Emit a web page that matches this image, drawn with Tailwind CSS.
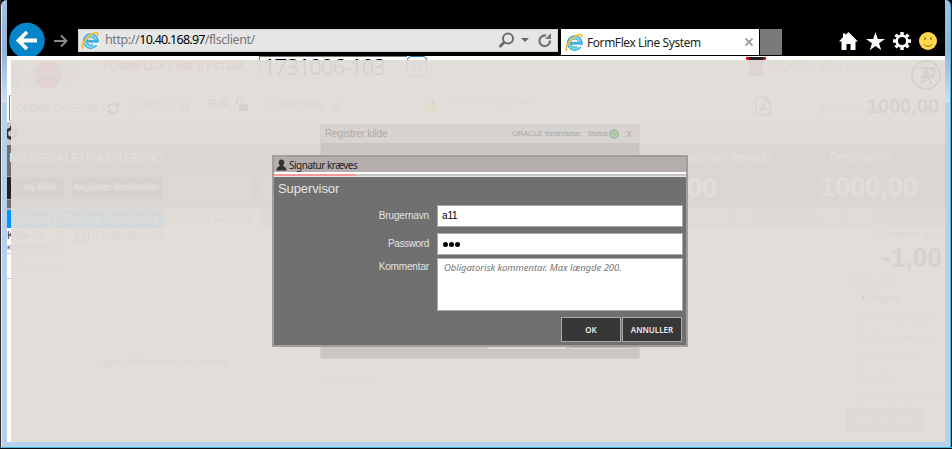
<!DOCTYPE html>
<html lang="da">
<head>
<meta charset="utf-8">
<title>FormFlex Line System</title>
<script src="https://cdn.jsdelivr.net/npm/@tailwindcss/browser@4"></script>
</head>
<body class="w-[952px] h-[449px] overflow-hidden bg-[#171c24] font-['Liberation_Sans',Arial,sans-serif] whitespace-nowrap">
<svg class="hidden">
  <symbol id="ie" viewBox="0 0 20 20">
    <circle cx="10.2" cy="10.6" r="6" fill="none" stroke="#329ed3" stroke-width="4.5"/>
    <circle cx="10.2" cy="10.6" r="5.9" fill="none" stroke="#78d6f5" stroke-width="2.6"/>
    <path d="M5 10.8h13.6" stroke="#42aedf" stroke-width="3"/>
    <path d="M12.5 12.4h7.5v2.3h-7.5z" fill="#f5f8fa"/>
    <path d="M2.4 18.5C-1 16.5 4 8 11 3.500C15 1 18.500.8 17.400 4.800" fill="none" stroke="#f4bd31" stroke-width="2"/>
  </symbol>
  <symbol id="lock" viewBox="0 0 12 14"><path d="M3 7V4a3 3 0 016 0v3" fill="none" stroke="currentColor" stroke-width="1.6"/><path d="M1 6.500h10V13H1z" fill="currentColor"/></symbol>
  <symbol id="refresh" viewBox="0 0 14 14"><path d="M1.500 6.500A5.500 5.500 0 0111 3.500M12.500 7.500A5.500 5.500 0 013 10.500" fill="none" stroke="currentColor" stroke-width="1.800"/><path d="M13 1v5H8zM1 13V8h5z" fill="currentColor"/></symbol>
  <symbol id="user" viewBox="0 0 12 12"><path d="M6 0c4 0 3.500 5 1.700 6.500C8 8 11.500 7.500 11.500 12H.5C.5 7.500 4 8 4.300 6.500C2.500 5 2 0 6 0z" fill="currentColor"/></symbol>
</svg>
<div class="relative flex flex-col w-[952px] h-[449px] bg-black border-b border-[#0a1014]">
  <div class="flex h-[448px] border-l border-[#352f36] border-b border-b-[#45b5d5]">
    <div class="w-[6px] shrink-0 rounded-tl-md border-l border-[#dfeaf5] bg-[linear-gradient(#a5c2df_0px,#93b2da_50px,#cfdff0_102px,#b8d1eb_103px)]"></div>
    <main class="w-[938px] flex flex-col shrink-0">
      <header class="h-[56px] shrink-0 flex pt-[22px] pl-[2px] overflow-hidden">
        <svg class="w-[36px] h-[37px] shrink-0" viewBox="0 0 36 37"><circle cx="18" cy="18.500" r="17.800" fill="#0385c8"/><path d="M28 18.500H10M18 10l-8.500 8.500L18 27" fill="none" stroke="#fff" stroke-width="3.800"/></svg>
        <svg class="w-[14px] h-[14px] mt-[12px] ml-[9px] shrink-0" viewBox="0 0 14 14"><path d="M0 7h12M7 1.500L12.500 7 7 12.500" fill="none" stroke="#8a8a8a" stroke-width="2"/></svg>
        <div class="flex w-[480px] h-[23px] mt-[7px] ml-[10px] bg-[#e6e6e6] items-center shrink-0 border border-[#d2d2d2]">
          <svg class="w-[19px] h-[19px] ml-[2px]"><use href="#ie"/></svg>
          <span class="ml-[5px] text-[12.500px] tracking-[-.4px] font-['Noto_Sans',sans-serif] text-[#777]">http://<b class="font-normal text-black tracking-[-.75px]">10.40.168.97</b>/flsclient/</span>
          <svg class="ml-auto w-[17px] h-[17px]" viewBox="0 0 17 17"><circle cx="10" cy="6.500" r="5" fill="none" stroke="#6b6b6b" stroke-width="2"/><path d="M6.500 10L1.500 15" stroke="#6b6b6b" stroke-width="2.600"/></svg>
          <svg class="ml-[6px] w-[8px] h-[5px]" viewBox="0 0 8 5"><path d="M0 0h8L4 4z" fill="#666"/></svg>
          <svg class="ml-[8px] mr-[5px] w-[15px] h-[15px]" viewBox="0 0 15 15"><path d="M9 2.700A5.300 5.300 0 1013 7.500" fill="none" stroke="#777" stroke-width="2.300"/><path d="M8 6h6V0z" fill="#777"/></svg>
        </div>
        <div class="flex items-center w-[198px] h-[26px] mt-[7px] ml-[3px] bg-white shrink-0">
          <svg class="w-[19px] h-[19px] ml-[4px]"><use href="#ie"/></svg>
          <span class="ml-[3px] mt-[2px] text-[11.900px] tracking-[-.38px] text-[#222] font-['Noto_Sans',sans-serif]">FormFlex Line System</span>
          <svg class="ml-auto mr-[6px] w-[8px] h-[8px]" viewBox="0 0 8 8"><path d="M.5.5l7 7M7.500.5l-7 7" stroke="#999" stroke-width="1.700"/></svg>
        </div>
        <div class="w-[22px] h-[26px] mt-[7px] ml-[1px] bg-[#7a7a7a] shrink-0"></div>
        <div class="flex items-center gap-[8px] ml-[57px] mt-[-2px] h-[42px]">
          <svg class="w-[19px] h-[19px]" viewBox="0 0 19 19"><path d="M9.500 0L19 9.500h-2.500V18H11.500v-6h-4v6h-5V9.500H0L4 5V1.500h2.500V3z" fill="#fff"/></svg>
          <svg class="w-[19px] h-[19px]" viewBox="0 0 19 19"><path d="M9.500 0l2.300 7H19l-6 4.200 2.300 7-5.800-4.300-5.800 4.300L6 11.200 0 7h7.200z" fill="#fff"/></svg>
          <svg class="w-[18px] h-[18px]" viewBox="-9 -9 18 18"><circle r="5.300" fill="none" stroke="#fff" stroke-width="2.600"/><path d="M0-9v3M0 9V6M-9 0h3M9 0H6M-6.400-6.400l2 2M6.400 6.400l-2-2M-6.400 6.400l2-2M6.400-6.400l-2 2" stroke="#fff" stroke-width="3.400"/></svg>
          <svg class="w-[18px] h-[18px]" viewBox="0 0 18 18"><circle cx="9" cy="9" r="9" fill="#ffd94b"/><ellipse cx="6" cy="6.500" rx=".8" ry="1.500" fill="#8b6b16"/><ellipse cx="12" cy="6.500" rx=".8" ry="1.500" fill="#8b6b16"/><path d="M4.500 12c2 3 7 3 9 0" fill="none" stroke="#8b6b16" stroke-width="1"/></svg>
        </div>
      </header>

      <section class="relative h-[386px] bg-white overflow-hidden text-[12px] leading-none text-[#555]">
        <div class="flex h-[38px]">
          <svg class="w-[72px] h-[27px] mt-[6px] ml-[5px] shrink-0" viewBox="0 0 72 27"><path d="M0 26V1h7l12 15V1h7v25h-7L7 12v14zM45 1h9l3 15L66 1h6L57 26h-7z" fill="#ccc"/><circle cx="36" cy="13" r="13.500" fill="#d63640"/><path d="M23 15c8-9 20 2 25-7" fill="none" stroke="#eee" stroke-width="2"/></svg>
          <b class="ml-[19px] w-[140px] mt-[5px] text-[11.500px] tracking-[-.15px] text-[#d9000c] shrink-0">FORMFLEX LINE SYSTEM</b>
          <div class="ml-[16px] w-[148px] h-[22px] border-t border-l border-[#777] shrink-0 pl-[3px]"><span class="block text-[22.500px] leading-[20px] tracking-[-1.300px] text-black font-['Noto_Sans',sans-serif]">1731006-103</span></div>
          <div class="w-[20px] h-[21px] rounded-sm border border-[#2878b0] grid place-items-center shrink-0"><svg class="w-[10px] h-[10px] text-[#777]"><use href="#refresh"/></svg></div>
          <svg class="w-[20px] h-[20px] mt-[1px] ml-[319px] shrink-0 text-[#c34545]" viewBox="0 0 20 20"><path d="M0 0h20v2l-4 9 4 8H0l4-8L0 2z" fill="currentColor"/><path d="M0 0h20v1l-2 2H2L0 1z" fill="#e00000"/><path d="M3 0h14v3H3z" fill="#222"/></svg>
          <span class="ml-[2px] mt-[6px] text-[10.500px] tracking-[-.15px] w-[136px] shrink-0">BRUGER:&nbsp; NOV Arbejdsstation</span>
          <svg class="w-[30px] h-[30px] mt-[4px] ml-auto mr-[4px] shrink-0 text-black" viewBox="0 0 30 30"><circle cx="15" cy="15" r="14" fill="none" stroke="currentColor" stroke-width="2"/><path d="M6 8h18M11 24l4-16 5 16M9 17h14M15 8v14M18 9c8-1 7 8 0 8" fill="none" stroke="currentColor" stroke-width="2"/></svg>
        </div>
        <div class="flex h-[28px] text-[11.500px]">
          <div class="ml-[2px] mt-[1px] w-[124px] h-[26px] flex items-center border border-[#ccc] border-l-[#777] pl-[5px] gap-[6px] shrink-0"><span class="text-[11px] tracking-[-.65px] w-[86px]">ORDRE OVERSIGT</span><svg class="w-[13px] h-[13px] shrink-0 text-black"><use href="#refresh"/></svg></div>
          <div class="mt-[1px] w-[68px] h-[25px] flex items-center border border-[#ccc] pl-[5px] pb-[4px] gap-[9px] shrink-0"><span class="text-[10.500px] tracking-[-.4px] w-[32px]">SETUP</span><svg class="w-[11px] h-[13px] text-[#aaa]"><use href="#lock"/></svg></div>
          <div class="w-[60px] h-[22px] flex items-center pl-[6px] pb-[2px] gap-[8px] shrink-0 text-black"><span class="text-[10px] tracking-[-.3px]">RUN</span><svg class="w-[12px] h-[13px]" viewBox="0 0 12 13"><path d="M1 6V3a2.500 2.500 0 015 0v3" fill="none" stroke="currentColor" stroke-width="1.500"/><path d="M3 6h9v7H3z" fill="currentColor"/></svg></div>
          <div class="mt-[1px] w-[92px] h-[25px] flex items-center border border-[#ccc] pl-[5px] pb-[4px] gap-[9px] shrink-0"><span class="text-[10.500px] tracking-[-.65px] w-[56px]">TEARDOWN</span><svg class="w-[10px] h-[13px] text-[#aaa]"><use href="#lock"/></svg></div>
          <svg class="w-[15px] h-[14px] ml-[72px] mt-[2px] shrink-0" viewBox="0 0 15 14"><path d="M7.500 0L15 14H0z" fill="#dfd000"/><path d="M7.500 4v5M7.500 10.500v1.500" stroke="#222" stroke-width="1.500"/></svg>
          <span class="ml-[9px] mt-[3px] text-[10px] tracking-[-.05px] w-[90px] shrink-0 text-[#777]">Ventende lab prøver</span>
          <svg class="w-[16px] h-[20px] ml-[216px] mt-[2px] shrink-0 text-[#333]" viewBox="0 0 16 20"><path d="M1 3a2 2 0 012-2h7l5 5v11a2 2 0 01-2 2H3a2 2 0 01-2-2zM10 1v5h5M3.500 15c5-1 4-5 4-8 0 4 3 6 5 6-3-1-6 0-9 2" fill="none" stroke="currentColor" stroke-width="1.500"/></svg>
          <div class="ml-auto mr-[6px] flex items-baseline gap-[4px]"><span class="text-[12px] text-[#666]">1000,00</span><b class="text-[20.500px] leading-[23px] text-black tracking-[-.25px]">1000,00</b></div>
        </div>
        <div class="h-[23px] bg-[#c8c5c2] flex items-center"><svg class="w-[14px] h-[15px] ml-[-3px]" viewBox="0 0 14 15"><circle cx="7" cy="7.500" r="4.500" fill="none" stroke="#333" stroke-width="3"/><path d="M7 0v15M0 7h14" stroke="#333" stroke-width="2" stroke-dasharray="3 8"/></svg></div>
        <div class="h-[63px] bg-[#707070] flex text-white">
          <div class="w-[673px] flex flex-col shrink-0">
            <span class="mt-[6px] ml-[2px] text-[13.500px] tracking-[-.5px]">MATERIALEHANDTERING</span>
            <div class="flex mt-[11px] gap-[5px] text-[8.500px] tracking-[-.25px] font-bold font-['Noto_Sans',sans-serif]">
              <div class="w-[58px] h-[24px] bg-[#222] border border-[#999] border-l-0 grid place-items-center pl-[10px]">Ny kilde</div>
              <div class="w-[93px] h-[24px] bg-[#222] border border-[#999] grid place-items-center">Registrer destination</div>
              <div class="w-[85px] h-[24px] bg-[#999] grid place-items-center text-[#bbb]">Stop brug af kilde</div>
              <div class="w-[85px] h-[24px] bg-[#999] flex items-center pl-[4px] text-[#bbb]">St</div>
            </div>
          </div>
          <div class="w-[100px] shrink-0 pt-[6px]"><div class="text-[12px] tracking-[-.15px] w-[92px] text-right">materiale længde:</div><b class="block mt-[8px] ml-[7px] text-[27px] leading-[35px]">00</b></div>
          <div class="w-[165px] pt-[6px] text-center"><div class="text-[12px] pr-[2px]">Destination:</div><b class="block text-[27px] leading-[35px] mt-[7px] ml-[13px]">1000,00</b></div>
        </div>
        <div class="h-[20px] bg-[#b6b3b1] flex items-end text-[9.500px] tracking-[-.3px] font-['Noto_Sans',sans-serif]">
          <div class="w-[47px] h-[18px] bg-[#0095ff] text-white grid place-items-center pl-[7px]">Lab test</div>
          <div class="w-[107px] h-[18px] ml-[3px] bg-[#0095ff] text-white grid place-items-center">Registrer lab svejsning</div>
          <div class="w-[92px] h-[19px] ml-[3px] bg-white grid place-items-center text-[#555]">Registrer svejsning</div>
          <span class="ml-[431px] mb-[8px] text-white">45&nbsp; Vægt:&nbsp; 7958</span><span class="ml-[67px] mb-[8px] text-white">Total:&nbsp; -4,00</span>
        </div>
        <div class="flex h-[214px]">
          <div class="w-[260px] shrink-0">
            <div class="flex h-[15px] items-center text-[#333] text-[10.500px] tracking-[-.35px]"><span class="w-[49px]">Kilde-ID:</span><span class="w-[20px]">()</span><svg class="w-[13px] h-[13px] mr-[6px]" viewBox="0 0 13 13"><path d="M.5.500h12v12H.5zM3 4h1M5 4h5M3 7h1M5 7h5M3 10h1M5 10h5" fill="none" stroke="currentColor"/></svg><span>Destinations-ID:</span></div>
            <div class="h-[10px] text-[8px] pt-px">Kommentar fejl</div>
            <div class="flex h-[26px] items-center border-y border-[#aaccdd] text-[10.500px] text-[#777]"><span class="w-[17px] h-full flex items-center pl-[5px] border-r border-[#ddd]">ID</span><span class="pl-[4px]">Position</span></div>
            <b class="block mt-[79px] ml-[91px] text-[10px] tracking-[-.15px] text-[#777]">Ingen kildemateriale indlæst</b>
          </div>
          <div class="ml-[57px] mt-[139px] w-[310px] shrink-0 flex text-[10px] text-[#999]"><span class="w-[94px] mt-[6px]">Kommentar</span><div class="w-[216px] h-[60px] border border-[#ddd]"></div></div>
          <div class="ml-auto w-[99px] shrink-0 overflow-hidden">
            <div class="pl-[28px] pt-[1px] text-[11.500px] tracking-[-.1px]">Til næste fejl</div>
            <b class="block text-right pr-[3px] text-[27px] leading-[34px] text-black tracking-[-.3px]">-1,00</b>
            <div class="text-[11px] text-[#888]">Signer for:</div>
            <div class="pl-[11px] pt-[2px] text-[9.500px] leading-[20px] tracking-[-.25px] text-[#888] font-['Noto_Sans',sans-serif]">
              <div class="flex h-[20px] items-center gap-[4px] text-[#222]"><i class="w-[12px] h-[12px] shrink-0 rounded-full border border-[#888] grid place-items-center"><i class="w-[4px] h-[4px] rounded-full bg-[#222]"></i></i>Ingen</div>
              <div class="flex h-[20px] items-center gap-[4px]"><i class="w-[12px] h-[12px] shrink-0 rounded-full border border-[#aaa]"></i>Udklipsdetaljer</div>
              <div class="flex h-[20px] items-center gap-[4px]"><i class="w-[12px] h-[12px] shrink-0 rounded-full border border-[#aaa]"></i>Flash Welding</div>
              <div class="flex h-[20px] items-center gap-[4px]"><i class="w-[12px] h-[12px] shrink-0 rounded-full border border-[#aaa]"></i>Visuel test</div>
              <div class="flex h-[20px] items-center gap-[4px]"><i class="w-[12px] h-[12px] shrink-0 rounded-full border border-[#aaa]"></i>MPI-I</div>
              <div class="flex h-[20px] items-center gap-[4px]"><i class="w-[12px] h-[12px] shrink-0 rounded-full border border-[#aaa]"></i>Svejsning afslutte</div>
            </div>
            <div class="w-[77px] h-[24px] bg-[#aaa] text-white grid place-items-center text-[9px]">Gem og afslut</div>
          </div>
        </div>
        <div class="absolute left-[4px] top-[4px] right-0 bottom-0 bg-[#e0dcd8]/[.952]"></div>

        <!-- source registration dialog, dimmed -->
        <div class="absolute left-[313px] top-[68px] w-[320px] h-[235px] bg-[#cac6c3] border border-[#d4d0cd]">
          <div class="h-[18px] bg-[#d7d3d0] flex items-center pl-[4px] text-[#aeaaa7]"><span class="text-[10px] tracking-[-.1px]">Registrer kilde</span><span class="ml-auto text-[8px] tracking-[-.35px] w-[94px]">ORACLE forbindelse:&nbsp;&nbsp; Status</span><i class="ml-[3px] w-[10px] h-[10px] rounded-full bg-[#adcaaa] border border-[#a7b5a3]"></i><span class="ml-[7px] mr-[7px] text-[9px]">X</span></div>
          <div class="flex mt-[203px] ml-[167px] gap-[5px]"><i class="w-[78px] h-[3px] bg-[#dfdcd9]"></i><i class="w-[60px] h-[3px] bg-[#bcb8b5] border-b border-[#dfdcd9]"></i></div>
        </div>

        <!-- signature dialog -->
        <div class="absolute left-[265px] top-[99px] w-[416px] h-[192px] bg-[#707070] border-2 border-[#a29d9b] flex flex-col">
          <div class="h-[15px] shrink-0 bg-[#b3aeab] flex items-center pl-[2px] text-[10px] text-[#222] font-['Noto_Sans',sans-serif] tracking-[-.5px]"><svg class="w-[11px] h-[12px] mr-[2px] text-[#333]"><use href="#user"/></svg>Signatur kræves</div>
          <div class="h-[5px] shrink-0 bg-white border-b border-[#e5e5e5] pt-[2px]"><div class="h-[2px] bg-[#c7c7c7]"><div class="w-[82px] h-[2px] bg-[#ff9898]"></div></div></div>
          <div class="h-[28px] shrink-0 pt-[5px] pl-[4px] text-[13px] text-[#e6e6e6] tracking-[-.1px]">Supervisor</div>
          <div class="grid grid-cols-[155px_246px] gap-x-[8px] gap-y-[5px] text-[10px] tracking-[-.15px] text-[#e2e2e2] text-right">
            <span class="pt-[6px]">Brugernavn</span><div class="h-[22px] bg-white border border-[#aaa] text-left text-black pl-[4px] pt-[5px]">a11</div>
            <span class="pt-[7px] tracking-[-.35px]">Password</span><div class="h-[22px] bg-white border border-[#aaa] flex items-center gap-px pl-[5px] mt-px"><i class="w-[5px] h-[5px] rounded-full bg-black"></i><i class="w-[5px] h-[5px] rounded-full bg-black"></i><i class="w-[5px] h-[5px] rounded-full bg-black"></i></div>
            <span class="pt-[4px] mt-[-2px]">Kommentar</span><div class="h-[53px] mt-[-2px] bg-white border border-[#aaa] text-left pl-[6px] pt-[4px] text-[9.500px] tracking-[-.05px] italic text-[#777] font-['Noto_Sans',sans-serif]">Obligatorisk kommentar. Max længde 200.</div>
          </div>
          <div class="flex justify-end gap-px mt-[6px] pr-[4px] text-[8px] text-[#eee] font-['Noto_Sans',sans-serif] font-semibold">
            <div class="w-[60px] h-[25px] bg-[#373737] border border-[#aaa] grid place-items-center">OK</div>
            <div class="w-[60px] h-[25px] bg-[#373737] border border-[#aaa] grid place-items-center">ANNULLER</div>
          </div>
        </div>
      </section>
      <div class="h-[5px] bg-[#b8d1ec]"></div>
    </main>
    <div class="w-[7px] shrink-0 rounded-tr-md border-r border-r-[#101820] bg-[#48b6d8] pr-px"><div class="h-full rounded-tr-md bg-[linear-gradient(#a5c2df_0px,#93b2da_50px,#cfdff0_102px,#b8d1eb_103px)]"></div></div>
  </div>
</div>
</body>
</html>
